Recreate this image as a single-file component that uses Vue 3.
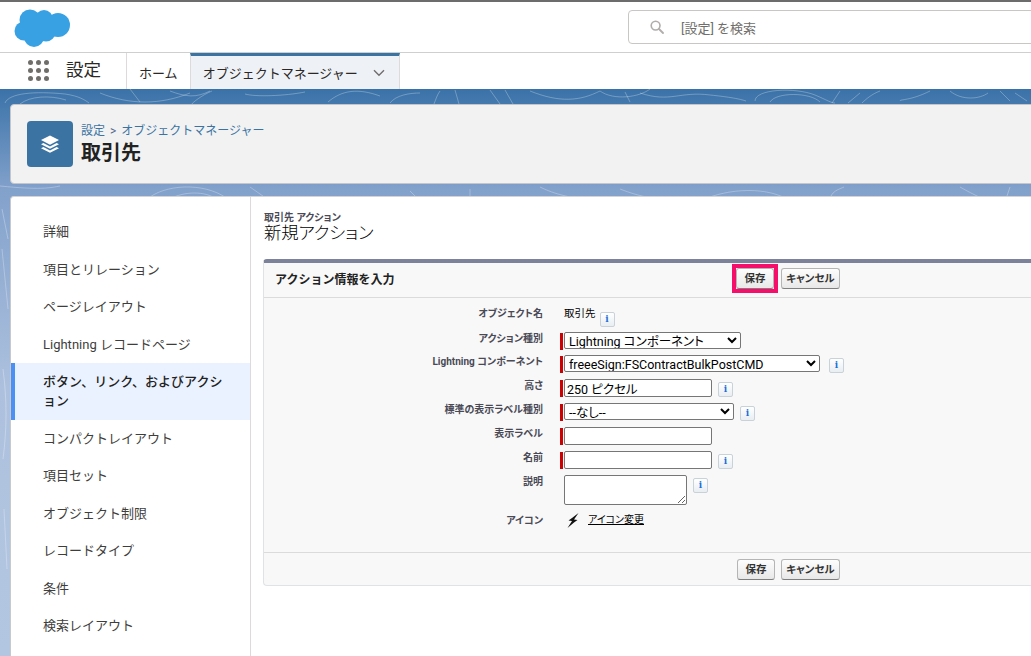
<template>
  <div class="app">
    <header class="top-bar">
      <svg class="logo" width="58" height="42" viewBox="0 0 58 42">
        <g fill="#38a1e4">
          <circle cx="17" cy="13" r="10.5" />
          <circle cx="31" cy="12" r="9" />
          <circle cx="45" cy="18" r="12" />
          <circle cx="33" cy="25" r="9.5" />
          <circle cx="21" cy="30" r="10" />
          <circle cx="11" cy="24" r="9.5" />
          <rect x="12" y="12" width="30" height="16" />
        </g>
      </svg>
      <div class="search">
        <svg class="search-icon" width="14" height="14" viewBox="0 0 14 14">
          <circle cx="5.6" cy="5.6" r="4.4" fill="none" stroke="#b0adab" stroke-width="1.6" />
          <path d="M9 9l4 4" stroke="#b0adab" stroke-width="1.8" stroke-linecap="round" />
        </svg>
        <span class="search-text">[設定] を検索</span>
      </div>
    </header>

    <nav class="nav-bar">
      <div class="launcher">
        <i v-for="n in 9" :key="n"></i>
      </div>
      <span class="app-name">設定</span>
      <a class="tab">ホーム</a>
      <a class="tab tab-active">
        オブジェクトマネージャー
        <svg width="12" height="8" viewBox="0 0 12 8">
          <path d="M1 1.2l5 5 5-5" fill="none" stroke="#706e6b" stroke-width="1.4" />
        </svg>
      </a>
    </nav>

    <div class="stage">
      <svg class="topo" width="1031" height="567" viewBox="0 0 1031 567" fill="none" stroke="#fff" stroke-opacity=".28">
        <path d="M5 14c4-10 30-12 60-9 14 2 20 6 24 9M20 15c10-8 30-9 46-4M100 4c30 12 60 12 90 0M140 13l-10-13M170 2c16 6 26 7 40 0M212 2c-10 4-20 12-20 13M245 5c10 3 40 2 60-2M328 13c14-12 30-14 52-6M390 14c6-8 20-10 30-10M440 2c-3 4-4 8-6 13M455 1l4 14M490 1l10 14M505 1l8 14" />
        <path d="M530 2c30 12 50 10 70 0M600 2c14 10 40 6 50-2M625 3l5 10M640 4c30 10 40-2 70 2 20 2 30 4 36 6M755 12c0-12 40-14 60-6 12 5 16 8 20 8M770 13c6-10 40-10 50 0M840 2l-8 12M860 4l-12 10M880 2c-8 3-14 8-18 12M930 2c-20 10-30 8-30 10" />
        <path d="M950 2c12 10 30 8 38 2M1000 2l10 10M1015 4l12 8" />
        <path d="M0 97c40 4 50 2 60 0M150 108c20-14 60-14 80 4M170 110c14-8 36-8 46 0M250 98l20 14M410 102l10 10M470 100v14M540 98c16 8 30 10 50 14M620 100c20 8 30 8 50 14M700 112c30-14 70-14 90 0M830 112c0-10 10-12 14-14M1010 98l-4 12M960 98c14 8 20 10 26 14" />
        <path d="M2 120l6 30M2 160l6 60M3 280c4 30 4 60 0 90M4 420l3 60" />
      </svg>

      <section class="page-card">
        <div class="obj-icon">
          <svg width="22" height="22" viewBox="0 0 22 22" fill="#fff">
            <path d="M11 2.5l9 4.6-9 4.6-9-4.6z" />
            <path d="M4.4 10l6.6 3.4 6.6-3.4 2.4 1.2-9 4.6-9-4.6z" />
            <path d="M4.4 14l6.6 3.4 6.6-3.4 2.4 1.2-9 4.6-9-4.6z" />
          </svg>
        </div>
        <div>
          <div class="crumbs">
            <a>設定</a><span class="sep">&gt;</span><a>オブジェクトマネージャー</a>
          </div>
          <h1 class="obj-title">取引先</h1>
        </div>
      </section>

      <div class="main">
        <aside class="sidebar">
          <a
            v-for="item in sideItems"
            :key="item"
            class="side-item"
            :class="{ active: item === activeItem }"
          >{{ item }}</a>
        </aside>

        <main class="content">
          <div class="page-type">取引先 アクション</div>
          <h2 class="page-desc">新規アクション</h2>

          <div class="panel">
            <div class="panel-head">
              <h3>アクション情報を入力</h3>
              <div class="btns">
                <span class="highlight">
                  <button class="btn btn-save">保存</button>
                </span>
                <button class="btn btn-cancel">キャンセル</button>
              </div>
            </div>

            <div class="panel-body">
              <div class="row row-obj">
                <label>オブジェクト名</label>
                <div class="field">
                  <span class="plain">取引先</span>
                  <span class="info info-obj">i</span>
                </div>
              </div>
              <div class="row row-first">
                <label>アクション種別</label>
                <div class="field">
                  <span class="req"></span>
                  <select class="ctl sel-type">
                    <option>Lightning コンポーネント</option>
                  </select>
                </div>
              </div>
              <div class="row">
                <label>Lightning コンポーネント</label>
                <div class="field">
                  <span class="req"></span>
                  <select class="ctl sel-comp">
                    <option>freeeSign:FSContractBulkPostCMD</option>
                  </select>
                  <span class="info">i</span>
                </div>
              </div>
              <div class="row">
                <label>高さ</label>
                <div class="field">
                  <span class="req"></span>
                  <input class="ctl txt" value="250 ピクセル" />
                  <span class="info">i</span>
                </div>
              </div>
              <div class="row">
                <label>標準の表示ラベル種別</label>
                <div class="field">
                  <span class="req"></span>
                  <select class="ctl sel-std">
                    <option>--なし--</option>
                  </select>
                  <span class="info">i</span>
                </div>
              </div>
              <div class="row">
                <label>表示ラベル</label>
                <div class="field">
                  <span class="req"></span>
                  <input class="ctl txt" />
                </div>
              </div>
              <div class="row">
                <label>名前</label>
                <div class="field">
                  <span class="req"></span>
                  <input class="ctl txt" />
                  <span class="info">i</span>
                </div>
              </div>
              <div class="row row-desc">
                <label>説明</label>
                <div class="field">
                  <textarea class="ctl area"></textarea>
                  <span class="info">i</span>
                </div>
              </div>
              <div class="row row-icon">
                <label>アイコン</label>
                <div class="field">
                  <svg class="bolt" width="12" height="15" viewBox="0 0 12 15">
                    <path d="M11.5 0L5 5 1.5 7.5 5 8 .5 15 7 9.5 10.5 7 7 6.5z" fill="#111" />
                  </svg>
                  <a class="change">アイコン変更</a>
                </div>
              </div>
            </div>

            <div class="panel-foot">
              <button class="btn btn-save">保存</button>
              <button class="btn btn-cancel">キャンセル</button>
            </div>
          </div>
        </main>
      </div>
    </div>
  </div>
</template>

<script setup>
const sideItems = [
  '詳細',
  '項目とリレーション',
  'ページレイアウト',
  'Lightning レコードページ',
  'ボタン、リンク、およびアクション',
  'コンパクトレイアウト',
  '項目セット',
  'オブジェクト制限',
  'レコードタイプ',
  '条件',
  '検索レイアウト'
]
const activeItem = 'ボタン、リンク、およびアクション'
</script>

<style>
html, body {
  margin: 0;
  overflow: hidden;
}
</style>

<style scoped>
.app {
  width: 1031px;
  height: 656px;
  overflow: hidden;
  font-family: Roboto, "Noto Sans CJK JP", sans-serif;
  color: #16325c;
  background: #fff;
}

/* Top bar */
.top-bar {
  height: 50px;
  border-top: 2px solid #6c6c6c;
  border-bottom: 1px solid #cfcfcf;
  display: flex;
  align-items: flex-start;
  position: relative;
}

.logo {
  margin: 5px 0 0 13px;
}

.search {
  margin: 8px -21px 0 auto;
  width: 422px;
  height: 32px;
  border: 1px solid #c9c7c5;
  border-radius: 4px;
  display: flex;
  align-items: center;
  box-sizing: content-box;
}

.search-icon {
  margin-left: 21px;
}

.search-text {
  margin-left: 17px;
  font-size: 13px;
  color: #706e6b;
}

/* Nav */
.nav-bar {
  height: 36px;
  display: flex;
  align-items: stretch;
}

.launcher {
  width: 21px;
  height: 21px;
  margin: 7px 0 0 28px;
  display: grid;
  grid-template-columns: repeat(3, 5px);
  grid-auto-rows: 5px;
  gap: 3px;
}

.launcher i {
  border-radius: 50%;
  background: #706e6b;
}

.app-name {
  margin-left: 17px;
  width: 60px;
  font-size: 17.5px;
  line-height: 35px;
  color: #2b2826;
}

.tab {
  display: flex;
  align-items: center;
  padding: 2px 12px 0;
  font-size: 13px;
  color: #2b2826;
  border-left: 1px solid #dddbda;
}

.tab-active {
  width: 210px;
  box-sizing: border-box;
  justify-content: space-between;
  padding: 0 14px 0 12px;
  background: #eef1f6;
  border-top: 3px solid #3b74a3;
  border-right: 1px solid #dddbda;
  border-left: 1px solid #dddbda;
}

/* Banner */
.stage {
  position: relative;
  height: 567px;
  padding: 15px 0 0 10px;
  box-sizing: border-box;
  background: linear-gradient(#3a72a8 0, #82a1cb 100px, #adc1de 300px, #b3c6e1 100%);
}

.topo {
  position: absolute;
  left: 0;
  top: 0;
}

.page-card {
  position: relative;
  height: 78px;
  margin-right: -10px;
  border: 1px solid #c4c6ca;
  border-radius: 4px;
  background: #f2f2f2;
  display: flex;
  align-items: center;
  gap: 8px;
  padding-left: 16px;
}

.obj-icon {
  width: 46px;
  height: 46px;
  border-radius: 4px;
  background: #3b74a3;
  display: flex;
  align-items: center;
  justify-content: center;
}

.crumbs {
  font-size: 12px;
  line-height: 16px;
  color: #3b74a3;
}

.sep {
  margin: 0 5px;
  color: #54698d;
}

.obj-title {
  margin: 1px 0 0;
  font-size: 20px;
  line-height: 26px;
  font-weight: 700;
  color: #222;
}

.main {
  position: relative;
  display: flex;
  height: 460px;
  margin-top: 12px;
  background: #fff;
  margin-right: -10px;
  border-left: 1px solid #c9c9c9;
  border-top: 1px solid #d4d4d4;
  border-radius: 4px 0 0 0;
}

/* Sidebar */
.sidebar {
  width: 240px;
  flex-shrink: 0;
  box-sizing: border-box;
  padding-top: 16px;
  border-right: 1px solid #dddbda;
}

.side-item {
  display: block;
  padding: 9px 20px 9.5px 32px;
  font-size: 13px;
  line-height: 19px;
  color: #3e3e3c;
}

.side-item.active {
  padding-left: 28px;
  border-left: 4px solid #4a90f5;
  background: #ebf2ff;
  color: #222;
  font-weight: 500;
}

/* Content */
.content {
  flex: 1;
  padding: 15px 0 0 12px;
  min-width: 0;
  font-feature-settings: "palt";
}

.page-type {
  padding-left: 1px;
  font-size: 10px;
  line-height: 12px;
  font-weight: 700;
  color: #4a4a56;
}

.page-desc {
  margin: 0 0 16px;
  padding-left: 1px;
  font-size: 17.3px;
  line-height: 19px;
  font-weight: 300;
  color: #000;
}

.panel {
  border-top: 4px solid #7b8299;
  border-left: 1px solid #e0e3e5;
  border-bottom: 1px solid #e0e3e5;
  border-radius: 4px 0 0 4px;
  background: #f8f8f8;
}

.panel-head {
  height: 34px;
  display: flex;
  align-items: center;
  border-bottom: 1px solid #dbdbdb;
}

.panel-head h3 {
  width: 473px;
  margin: 0 0 3px;
  padding-left: 11px;
  box-sizing: border-box;
  font-size: 12px;
  font-weight: 700;
  font-feature-settings: normal;
  color: #222;
}

.btns {
  display: flex;
  align-items: center;
  gap: 3px;
  margin-bottom: 3px;
}

.highlight {
  display: inline-flex;
  border: 4px solid #f50f6b;
  margin-left: -5px;
}

.btn {
  height: 21px;
  padding: 0;
  border: 1px solid #b5b5b5;
  border-bottom-color: #7f7f7f;
  border-radius: 3px;
  background: linear-gradient(#fdfdfd, #e8e8e8);
  font-family: inherit;
  font-feature-settings: "palt";
  font-size: 10.5px;
  font-weight: 700;
  line-height: 17px;
  color: #333;
}

.btn-save {
  width: 38px;
}

.btn-cancel {
  width: 59px;
}

.panel-body {
  height: 254px;
  box-sizing: border-box;
  padding-top: 8px;
}

.row {
  display: flex;
  height: 24px;
}

.row label {
  width: 279px;
  flex-shrink: 0;
  box-sizing: border-box;
  padding-top: 1px;
  text-align: right;
  font-size: 10px;
  line-height: 16px;
  font-weight: 700;
  color: #4a4a56;
}

.field {
  position: relative;
  margin-left: 21px;
  display: flex;
  align-items: flex-start;
  padding-top: 2px;
  height: 20px;
}

.row-obj label,
.row-obj .field {
  padding-top: 0;
}

.row-first {
  height: 23px;
}

.row-desc {
  height: 39px;
}

.row-icon {
  height: 20px;
}

.row-icon .field {
  padding-top: 0;
}

.plain {
  font-size: 10.5px;
  line-height: 16px;
  color: #000;
}

.req {
  position: absolute;
  left: -4px;
  top: 3px;
  width: 3px;
  height: 17px;
  background: #c00;
}

.ctl {
  box-sizing: border-box;
  margin: 0;
  border: 1px solid #767676;
  border-radius: 2px;
  background: #fff;
  font-family: Roboto, "Noto Sans CJK JP", sans-serif;
  font-feature-settings: "palt";
  font-size: 12.5px;
  color: #000;
}

select.ctl {
  height: 17px;
  padding: 0;
  line-height: 15px;
}

.sel-type {
  width: 177px;
}

.sel-comp {
  width: 256px;
}

.sel-std {
  width: 170px;
}

.txt {
  width: 148px;
  height: 18px;
  padding: 0 2px;
}

.area {
  display: block;
  width: 123px;
  height: 30px;
  padding: 0 2px;
}

.info {
  width: 13px;
  height: 13px;
  margin: 3px 0 0 6px;
  border: 1px solid #c9d2d8;
  border-radius: 2px;
  background: linear-gradient(#fff, #e8eef3);
  font-family: "DejaVu Serif", serif;
  font-size: 9px;
  line-height: 13px;
  font-weight: 700;
  text-align: center;
  color: #1f6fd6;
}

.sel-comp + .info {
  margin-left: 9px;
}

.info-obj {
  margin: 6px 0 0 4px;
}

.bolt {
  margin: 1px 0 0 3px;
}

.change {
  margin-left: 9px;
  font-size: 10px;
  line-height: 16px;
  color: #000;
  text-decoration: underline;
}

.panel-foot {
  height: 32px;
  display: flex;
  align-items: center;
  gap: 6px;
  padding-left: 473px;
  border-top: 1px solid #dbdbdb;
}
</style>
